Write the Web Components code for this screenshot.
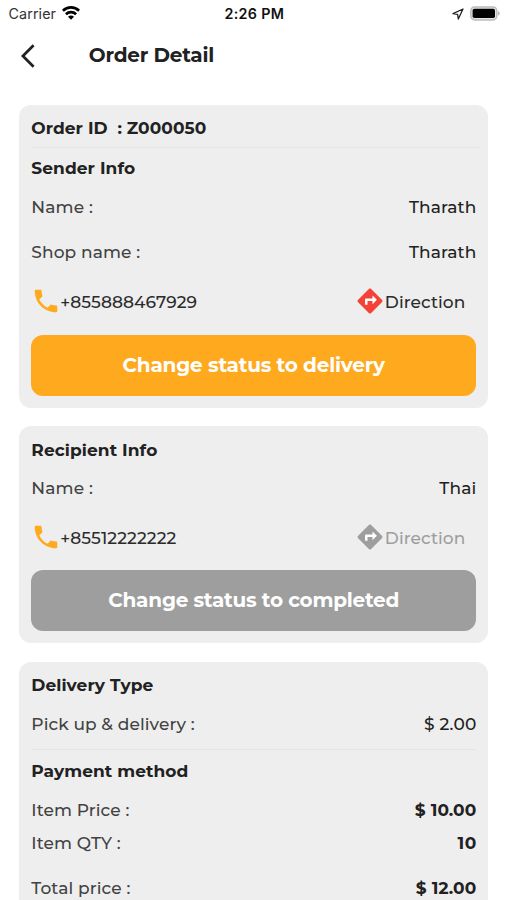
<!DOCTYPE html>
<html lang="en">
<head>
<meta charset="utf-8">
<meta name="viewport" content="width=device-width, initial-scale=1">
<title>Order Detail</title>
<style>
  html, body {
    margin: 0;
    height: 900px;
    overflow: hidden;
    background: #fff;
    color: #212121;
    font-family: Montserrat, Inter, 'Liberation Sans', sans-serif;
  }
</style>
</head>
<body>
<order-page>
  <status-bar slot="top"></status-bar>
  <nav-bar slot="top"><fit-text w="125.5">Order Detail</fit-text></nav-bar>

  <info-card>
    <info-row kind="title" h="30"><fit-text w="175">Order ID  : Z000050</fit-text></info-row>
    <card-divider style="margin: 4px -3.5px 0 0"></card-divider>
    <info-row kind="title" h="40"><fit-text w="103.8">Sender Info</fit-text></info-row>
    <info-row h="38"><fit-text w="61.5">Name :</fit-text><fit-text slot="value" w="67.3">Tharath</fit-text></info-row>
    <info-row h="52.5"><fit-text w="108.8">Shop name :</fit-text><fit-text slot="value" w="67.3">Tharath</fit-text></info-row>
    <contact-row h="47"><fit-text w="136.8">+855888467929</fit-text><fit-text slot="direction" w="80.5">Direction</fit-text></contact-row>
    <status-button style="margin-top: 9px"><fit-text w="262.5">Change status to delivery</fit-text></status-button>
  </info-card>

  <info-card>
    <info-row kind="title" h="31"><fit-text w="126">Recipient Info</fit-text></info-row>
    <info-row h="46.5"><fit-text w="61.5">Name :</fit-text><fit-text slot="value" w="37">Thai</fit-text></info-row>
    <contact-row h="52.5" disabled><fit-text w="116">+85512222222</fit-text><fit-text slot="direction" w="80.5">Direction</fit-text></contact-row>
    <status-button disabled style="margin-top: 6px"><fit-text w="291">Change status to completed</fit-text></status-button>
  </info-card>

  <info-card>
    <info-row kind="title" h="31"><fit-text w="122">Delivery Type</fit-text></info-row>
    <info-row h="47"><fit-text w="163.3">Pick up &amp; delivery :</fit-text><fit-text slot="value" w="52.3">$ 2.00</fit-text></info-row>
    <card-divider style="margin-top: 1.5px"></card-divider>
    <info-row kind="title" h="40.5"><fit-text w="157">Payment method</fit-text></info-row>
    <info-row kind="price" h="38"><fit-text w="98">Item Price :</fit-text><fit-text slot="value" w="61.5">$ 10.00</fit-text></info-row>
    <info-row kind="price" h="28.5"><fit-text w="89.3">Item QTY :</fit-text><fit-text slot="value" w="18.8">10</fit-text></info-row>
    <info-row kind="price" h="61.5"><fit-text w="99">Total price :</fit-text><fit-text slot="value" w="60.5">$ 12.00</fit-text></info-row>
  </info-card>
</order-page>

<script>
class FitText extends HTMLElement {
  connectedCallback() {
    if (!this.shadowRoot) {
      // white-space is kept on the slot only, the markup here must not add lines
      this.attachShadow({ mode: 'open' }).innerHTML = `
        <style>
          :host { display: block; flex: none; line-height: 20px; }
          slot { display: block; white-space: pre; }
        </style>
        <slot></slot>
      `;
    }
  }

  fit() {
    const target = parseFloat(this.getAttribute('w'));
    const count = this.textContent.length;
    if (!target || count < 2) return;
    const range = document.createRange();
    range.selectNodeContents(this);
    const spacing = (target - range.getBoundingClientRect().width) / (count - 1);
    this.style.letterSpacing = spacing + 'px';
    this.style.marginRight = -spacing + 'px';
  }
}

class OrderPage extends HTMLElement {
  connectedCallback() {
    this.attachShadow({ mode: 'open' }).innerHTML = `
      <style>
        :host { display: block; }
        main {
          display: flex;
          flex-direction: column;
          gap: 18.7px;
          padding: 20px 18.7px 0 19.3px;
        }
      </style>
      <slot name="top"></slot>
      <main><slot></slot></main>
    `;
  }
}

class StatusBar extends HTMLElement {
  connectedCallback() {
    this.attachShadow({ mode: 'open' }).innerHTML = `
      <style>
        :host {
          display: grid;
          grid-template-columns: 1fr auto 1fr;
          align-items: center;
          height: 28px;
          padding: 0 7px 0 8.5px;
          box-sizing: border-box;
          font-family: Inter, sans-serif;
          font-size: 14.3px;
          color: #111;
        }
        .left, .right { display: flex; align-items: center; }
        .left { gap: 5.5px; color: #333; }
        .right { justify-content: flex-end; gap: 6px; }
        .time { font-weight: 600; }
        svg { display: block; }
      </style>
      <div class="left">
        <fit-text w="47.5">Carrier</fit-text>
        <svg width="18" height="15" viewBox="0 0 18 15" style="margin-top:-3px">
          <g fill="none" stroke="#000" stroke-width="2.7">
            <path d="M.9 5.7C5.5 1.3 12.5 1.3 17.1 5.7"/>
            <path d="M3.9 9.3c2.9-2.8 7.3-2.8 10.2 0"/>
          </g>
          <path d="M9 14.8l-3-3c1.7-1.6 4.3-1.6 6 0z"/>
        </svg>
      </div>
      <div class="time"><fit-text w="59.5">2:26 PM</fit-text></div>
      <div class="right">
        <svg width="12" height="12" viewBox="0 0 12 12">
          <path d="M11 1L1 5.7l4.6.6.7 4.7z" fill="none" stroke="#222" stroke-width="1.3" stroke-linejoin="round"/>
        </svg>
        <svg width="30" height="15" viewBox="0 0 30 15" style="margin-top:-2px">
          <rect x=".8" y=".9" width="26" height="13" rx="3.8" fill="#e4e4e4" stroke="#bcbcbc" stroke-width="1.5"/>
          <rect x="2.6" y="2.8" width="22.4" height="9.2" rx="1.8"/>
          <path d="M28.2 5.2c1.9.6 1.9 3.8 0 4.4z" fill="#aaa"/>
        </svg>
      </div>
    `;
  }
}

class NavBar extends HTMLElement {
  connectedCallback() {
    this.attachShadow({ mode: 'open' }).innerHTML = `
      <style>
        :host {
          display: flex;
          align-items: center;
          gap: 52.8px;
          height: 57px;
          padding: 0 20px 1px 20px;
          box-sizing: border-box;
          font-size: 20px;
          font-weight: 700;
        }
        ::slotted(*) { margin-top: -1.5px; }
      </style>
      <svg width="16" height="26" viewBox="0 0 16 26">
        <path d="M13.6 2.2L2.9 13l10.7 10.8" fill="none" stroke="#212121" stroke-width="2.7"/>
      </svg>
      <slot></slot>
    `;
  }
}

class InfoCard extends HTMLElement {
  connectedCallback() {
    this.attachShadow({ mode: 'open' }).innerHTML = `
      <style>
        :host {
          display: block;
          padding: 8px 12px 12px;
          border-radius: 12px;
          background: #eee;
        }
      </style>
      <slot></slot>
    `;
  }
}

class CardDivider extends HTMLElement {
  connectedCallback() {
    this.attachShadow({ mode: 'open' }).innerHTML = `
      <style>
        :host { display: block; height: 1px; background: #e4e4e4; }
      </style>
    `;
  }
}

class InfoRow extends HTMLElement {
  connectedCallback() {
    this.attachShadow({ mode: 'open' }).innerHTML = `
      <style>
        :host {
          display: flex;
          align-items: center;
          justify-content: space-between;
          height: ${this.getAttribute('h')}px;
          font-size: 17px;
          font-weight: 500;
          color: #424242;
        }
        :host([kind="title"]) { font-weight: 700; color: #212121; }
        .value { color: #212121; }
        :host([kind="price"]) .value { font-weight: 700; }
      </style>
      <slot></slot>
      <div class="value"><slot name="value"></slot></div>
    `;
  }
}

class ContactRow extends HTMLElement {
  connectedCallback() {
    this.attachShadow({ mode: 'open' }).innerHTML = `
      <style>
        :host {
          display: flex;
          align-items: center;
          justify-content: space-between;
          height: ${this.getAttribute('h')}px;
          padding-right: 11px;
          font-size: 17px;
          font-weight: 500;
          color: #2b2b2b;
        }
        .item { display: flex; align-items: center; }
        svg { width: 30px; height: 30px; margin-top: -2px; }
        .phone { fill: #ffa91f; margin: -2px -.5px 0 -.5px; }
        .turn { fill: #f44336; margin-right: -.5px; }
        :host([disabled]) .turn { fill: #9e9e9e; }
        :host([disabled]) .direction { color: #9e9e9e; }
      </style>
      <div class="item">
        <svg class="phone" viewBox="0 0 24 24">
          <path d="M6.62 10.79c1.44 2.83 3.76 5.14 6.59 6.59l2.2-2.2c.27-.27.67-.36 1.02-.24 1.12.37 2.33.57 3.57.57.55 0 1 .45 1 1V20c0 .55-.45 1-1 1-9.39 0-17-7.61-17-17 0-.55.45-1 1-1h3.5c.55 0 1 .45 1 1 0 1.25.2 2.45.57 3.57.11.35.03.74-.25 1.02l-2.2 2.2z"/>
        </svg>
        <slot></slot>
      </div>
      <div class="item direction">
        <svg class="turn" viewBox="0 0 24 24">
          <path d="M8 7h10v8H8z" fill="#fff"/>
          <path d="M21.71 11.29l-9-9c-.39-.39-1.02-.39-1.41 0l-9 9c-.39.39-.39 1.02 0 1.41l9 9c.39.39 1.02.39 1.41 0l9-9c.39-.38.39-1.01 0-1.41zM14 14.5V12h-4v3H8v-4c0-.55.45-1 1-1h5V7.5l3.5 3.5-3.5 3.5z"/>
        </svg>
        <slot name="direction"></slot>
      </div>
    `;
  }
}

class StatusButton extends HTMLElement {
  connectedCallback() {
    this.attachShadow({ mode: 'open' }).innerHTML = `
      <style>
        :host { display: block; }
        button {
          display: flex;
          align-items: center;
          justify-content: center;
          width: 100%;
          height: 61px;
          padding: 0 0 1px;
          border: 0;
          border-radius: 12px;
          background: #ffa91f;
          color: #fff;
          font: inherit;
          font-size: 20px;
          font-weight: 700;
        }
        :host([disabled]) button { background: #9e9e9e; }
      </style>
      <button><slot></slot></button>
    `;
  }
}

customElements.define('order-page', OrderPage);
customElements.define('status-bar', StatusBar);
customElements.define('nav-bar', NavBar);
customElements.define('info-card', InfoCard);
customElements.define('card-divider', CardDivider);
customElements.define('info-row', InfoRow);
customElements.define('contact-row', ContactRow);
customElements.define('status-button', StatusButton);
customElements.define('fit-text', FitText);

// Every slot is filled by now, so the texts can be measured
document.querySelectorAll('fit-text').forEach((el) => el.fit());
document.querySelector('status-bar').shadowRoot
  .querySelectorAll('fit-text').forEach((el) => el.fit());
</script>
</body>
</html>
